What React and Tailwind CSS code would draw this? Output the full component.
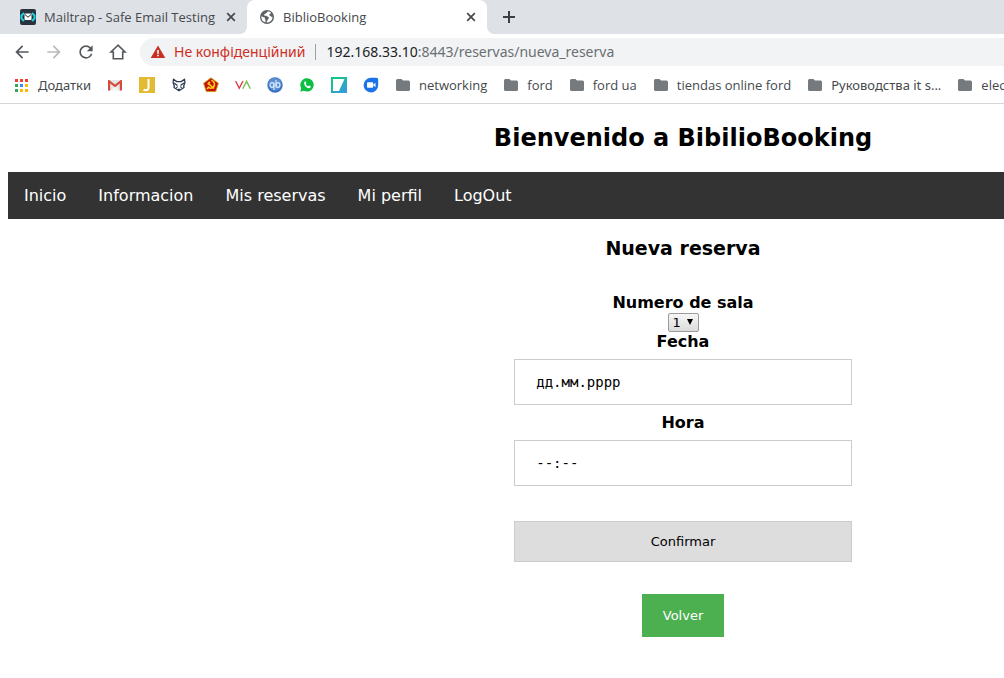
import React from "react";

function MailtrapIcon() {
  return (
    <svg viewBox="0 0 16 16" className="size-4 shrink-0" aria-hidden="true">
      <rect width="16" height="16" rx="2" fill="#2a3240" />
      <path d="M4 4 1.500 6.500v3L4 12M12 4l2.500 2.500v3L12 12" fill="none" stroke="#18d3dc" strokeWidth="2" />
      <rect x="4.500" y="4.500" width="7" height="6.500" rx="1" fill="#fff" />
      <path d="m5 5.600 3 2.600 3-2.600" fill="none" stroke="#2a3240" strokeWidth="1" />
    </svg>
  );
}

function GlobeIcon() {
  return (
    <svg viewBox="0 0 16 16" className="size-4 shrink-0" aria-hidden="true">
      <circle cx="8" cy="8" r="7" fill="#5f6368" />
      <path d="M8.5 2.4c-.6.8-.2 1.2-1.2 1.6-1 .3-.8 1.200-1.800 1.300-.9.1-.4 1.200.3 1.400.8.2 2.200-.2 2.600.7.3.7 1.300.4 1.600 1.100.2.7-.8 1.100-1 1.900-.2.8-1 1.300-1.300 2.400 0 .6.100.8.5.8a5.500 5.500 0 0 0 5.300-5.800c-.8.2-1.700-.2-2-.9-.3-.6-1.300-.2-1.300-1 0-.9.9-.9 1.400-1.500.3-.5.100-.8.100-1.200-.9-.6-2-.9-3.200-.8Z" fill="#fff" />
      <path d="M2.400 7.200c.9.200 1.600 1 2.700 1.100.8.100.9.800.8 1.400-.1.700.7.800.6 1.500v2.100A5.700 5.700 0 0 1 2.400 7.200Z" fill="#fff" />
    </svg>
  );
}

function CloseIcon() {
  return (
    <svg viewBox="0 0 16 16" className="size-4" aria-hidden="true">
      <path d="m4.200 4.200 7.600 7.600M11.800 4.200l-7.600 7.600" stroke="#45494d" strokeWidth="1.700" />
    </svg>
  );
}

function ArrowIcon({ forward }) {
  return (
    <svg viewBox="0 0 24 24" className="size-5" aria-hidden="true">
      {forward ? (
        <path d="m12 4-1.410 1.410L16.170 11H4v2h12.170l-5.580 5.590L12 20l8-8z" fill="#b8babc" />
      ) : (
        <path d="M20 11H7.830l5.590-5.590L12 4l-8 8 8 8 1.410-1.410L7.830 13H20v-2z" fill="#54585d" />
      )}
    </svg>
  );
}

function ReloadIcon() {
  return (
    <svg viewBox="0 0 24 24" className="size-5" aria-hidden="true">
      <path d="M17.650 6.350A7.958 7.958 0 0 0 12 4a8 8 0 1 0 7.730 10h-2.080A5.990 5.990 0 0 1 12 18a6 6 0 1 1 0-12c1.660 0 3.140.690 4.220 1.780L13 11h7V4l-2.350 2.350z" fill="#54585d" />
    </svg>
  );
}

function HomeIcon() {
  return (
    <svg viewBox="0 0 20 20" className="size-5" aria-hidden="true">
      <path d="M10 3.200 3 10h2.300v6.700h9.400V10H17z" fill="none" stroke="#54585d" strokeWidth="1.600" />
    </svg>
  );
}

function AppsIcon() {
  const colors = ["#ea4335", "#ea4335", "#ea4335", "#34a853", "#4285f4", "#fbbc05", "#34a853", "#fbbc05", "#fbbc05"];
  return (
    <svg viewBox="0 0 13 13" className="size-[13px] shrink-0" aria-hidden="true">
      {colors.map((c, i) => (
        <rect key={i} x={(i % 3) * 5} y={Math.floor(i / 3) * 5} width="3" height="3" fill={c} />
      ))}
    </svg>
  );
}

function FolderIcon() {
  return (
    <svg viewBox="0 0 16 16" className="size-4 shrink-0" aria-hidden="true">
      <path d="M2.500 2h4l1.500 1.500h5.500A1.500 1.500 0 0 1 15 5v7.500a1.500 1.500 0 0 1-1.500 1.500h-11A1.500 1.500 0 0 1 1 12.500v-9A1.500 1.500 0 0 1 2.500 2Z" fill="#757a7e" />
    </svg>
  );
}

const siteIcons = [
  {
    name: "Gmail",
    art: (
      <>
        <path d="M1 3h14v10.500H1z" fill="#e6e6e6" />
        <path d="m3.500 13.500 4.500-4 4.500 4z" fill="#f5f5f5" />
        <path d="M1 13.500V3h1.200L8 7.600 13.800 3H15v10.500h-2.200V6.600L8 10.300 3.200 6.600v6.900z" fill="#d54b3d" />
      </>
    ),
  },
  {
    name: "J",
    art: (
      <>
        <rect width="16" height="16" fill="#e3bb32" />
        <path d="M9.500 2v8.500c0 2-1 2.700-2.500 2.700-1 0-1.800-.2-2.500-.6" fill="none" stroke="#fff" strokeWidth="2" />
      </>
    ),
  },
  {
    name: "Fox",
    art: (
      <g fill="none" stroke="#2d3a57" strokeWidth="1.300" strokeLinejoin="round">
        <path d="M2.500 2.200 5.800 4.600h4.400l3.300-2.400.4 3.300-1.200 3.500.3 1.500L8 13.800 3 10.500 3.300 9 2.100 5.500z" />
        <path d="m3 6 3.500 2.500M13 6 9.500 8.500M5.500 11l1-1.500M10.500 11l-1-1.500M7 12.300h2" />
      </g>
    ),
  },
  {
    name: "Hammer and sickle",
    art: (
      <>
        <path d="M8 .8 15.400 6.300 12.700 14.600H3.300L.6 6.300z" fill="#c70d0d" stroke="#c9a01c" strokeWidth="1" strokeLinejoin="round" />
        <path d="M8.300 3.300c3.200.8 4.200 4.600 2 6.700-1.700 1.600-4 1.300-5.500-.2M4 12l1.500-1.500M5.600 6.800l5.600 4.700M4.700 7.400l2.200-2.500" fill="none" stroke="#ffd21a" strokeWidth="1.600" />
      </>
    ),
  },
  {
    name: "VA",
    art: (
      <g fill="none" strokeWidth="1.400">
        <path d="M.6 4 4.200 11.300 8 4" stroke="#e2394c" />
        <path d="m7.800 11.800 3.800-7.400 3.700 7.400" stroke="#79bd57" />
      </g>
    ),
  },
  {
    name: "qBittorrent",
    art: (
      <>
        <circle cx="8" cy="8" r="7.700" fill="#3c74bd" />
        <circle cx="8" cy="7" r="6.300" fill="#5b8fd2" />
        <g fill="none" stroke="#d5e8ff" strokeWidth="1.200">
          <ellipse cx="5" cy="8" rx="1.900" ry="2.300" />
          <ellipse cx="11" cy="8" rx="1.900" ry="2.300" />
          <path d="M7 5.500v7.500M9 3v7.500" />
        </g>
      </>
    ),
  },
  {
    name: "WhatsApp",
    art: (
      <>
        <path d="M1.300 14.700 2.200 11.300A6.700 6.700 0 1 1 4.800 13.800z" fill="#0abf42" />
        <path d="M5.700 4.500c.5-.3.900-.2 1.100.3l.5 1.200c.2.500-.6.900-.5 1.200.5.900 1.200 1.500 2.200 2 .4.100.7-.8 1.200-.6l1.300.6c.5.300.3 1-.1 1.400-2.600 2.200-7.900-2.700-5.700-6.100z" fill="#fff" />
      </>
    ),
  },
  {
    name: "Green square",
    art: (
      <>
        <defs>
          <linearGradient id="teal-fade" x1="0" y1="0" x2="0.600" y2="1">
            <stop offset="0" stopColor="#08cf7a" />
            <stop offset="1" stopColor="#339ddb" />
          </linearGradient>
        </defs>
        <rect width="16" height="16" fill="url(#teal-fade)" />
        <path d="M2 2h11.500L8 14H2z" fill="#fff" />
      </>
    ),
  },
  {
    name: "Duo",
    art: (
      <>
        <path d="M8 .8h5.200c1.200 0 2 .8 2 2V8A7.300 7.300 0 1 1 8 .8z" fill="#1a73e8" />
        <rect x="4" y="5.300" width="6.200" height="5.400" rx="1" fill="#fff" />
        <path d="m10 8 2.500-2.300v4.600z" fill="#fff" />
      </>
    ),
  },
];

const folders = ["networking", "ford", "ford ua", "tiendas online ford"];

function Tab({ title, icon, active }) {
  return (
    <div
      className={
        active
          ? "relative flex w-60 shrink-0 items-center gap-2 rounded-t-lg bg-white pr-2 pl-3 before:absolute before:-left-2 before:bottom-0 before:size-2 before:bg-[radial-gradient(circle_at_0_0,transparent_8px,white_8px)] after:absolute after:-right-2 after:bottom-0 after:size-2 after:bg-[radial-gradient(circle_at_100%_0,transparent_8px,white_8px)]"
          : "flex w-[239px] shrink-0 items-center gap-2 pr-2 pl-3"
      }
    >
      {icon}
      <span className="flex-1 text-[13px] leading-5 whitespace-nowrap">{title}</span>
      <button type="button" aria-label={"Close " + title}>
        <CloseIcon />
      </button>
    </div>
  );
}

function BrowserChrome() {
  return (
    <header className="border-b border-[#d5d6d8] font-['Open_Sans','Noto_Sans',sans-serif] text-[#45494d]">
      <div className="flex h-[34px] bg-[#dee1e6] pl-2">
        <Tab title="Mailtrap - Safe Email Testing" icon={<MailtrapIcon />} />
        <Tab title="BiblioBooking" icon={<GlobeIcon />} active />
        <button type="button" aria-label="New tab" className="ml-3 self-center">
          <svg viewBox="0 0 20 20" className="size-5" aria-hidden="true">
            <path d="M10 4v12M4 10h12" stroke="#3c4043" strokeWidth="2" />
          </svg>
        </button>
      </div>
      <div className="flex h-[35px] items-center bg-white pl-3">
        <div className="flex gap-3">
          <button type="button" aria-label="Back"><ArrowIcon /></button>
          <button type="button" aria-label="Forward"><ArrowIcon forward /></button>
          <button type="button" aria-label="Reload"><ReloadIcon /></button>
          <button type="button" aria-label="Home"><HomeIcon /></button>
        </div>
        <div className="ml-3 flex h-7 flex-1 items-center rounded-l-full bg-[#f1f3f4] pl-2.5 font-['Noto_Sans',sans-serif] text-sm leading-5 whitespace-nowrap">
          <svg viewBox="0 0 16 16" className="size-4" aria-hidden="true">
            <path d="M8 1.500 15.300 14H.7z" fill="#c93025" />
            <path d="M7.200 6h1.600v3.800H7.200zM7.200 10.800h1.600v1.500H7.200z" fill="#fff" />
          </svg>
          <span className="ml-2 text-[#cf2e24]">Не конфіденційний</span>
          <span className="ml-2.5 h-4 w-px bg-[#9aa0a6]" />
          <span className="ml-2.5 text-[#6b6f73]">
            <span className="text-[#202124]">192.168.33.10</span>:8443/reservas/nueva_reserva
          </span>
        </div>
      </div>
      <nav aria-label="Bookmarks" className="flex h-[34px] items-center gap-4 overflow-hidden bg-white pb-0.5 pl-[15px] text-[13px] leading-5 whitespace-nowrap">
        <a href="#apps" className="flex w-19 shrink-0 items-center gap-2.5 font-['Noto_Sans',sans-serif]">
          <AppsIcon />
          Додатки
        </a>
        {siteIcons.map((s) => (
          <a key={s.name} href="#site" aria-label={s.name} className="shrink-0">
            <svg viewBox="0 0 16 16" className="size-4" aria-hidden="true">{s.art}</svg>
          </a>
        ))}
        {folders.map((f) => (
          <a key={f} href="#folder" className="flex shrink-0 items-center gap-2">
            <FolderIcon />
            {f}
          </a>
        ))}
        <a href="#folder" className="flex shrink-0 items-center gap-2 font-['Noto_Sans',sans-serif]">
          <FolderIcon />
          Руководства it s...
        </a>
        <a href="#folder" className="flex shrink-0 items-center gap-2">
          <FolderIcon />
          elec
        </a>
      </nav>
    </header>
  );
}

const links = ["Inicio", "Informacion", "Mis reservas", "Mi perfil", "LogOut"];

export default function App() {
  return (
    <div className="min-h-screen overflow-hidden bg-white">
      <BrowserChrome />
      <main className="min-w-[1366px] px-2 pb-10 text-center font-['DejaVu_Sans',sans-serif] text-base leading-[19px] text-black">
        <h1 className="my-5 text-2xl leading-7 font-bold">Bienvenido a BibilioBooking</h1>
        <nav aria-label="Principal" className="flex bg-[#333] text-white">
          {links.map((l) => (
            <a key={l} href="#nav" className="px-4 py-3.5">{l}</a>
          ))}
        </nav>
        <h2 className="mt-[18px] text-[19px] leading-[22px] font-bold">Nueva reserva</h2>
        <form className="mt-8 flex flex-col items-center pt-0.5" onSubmit={(e) => e.preventDefault()}>
          <label htmlFor="sala" className="font-bold">Numero de sala</label>
          <div className="relative mt-px flex">
            <select
              id="sala"
              className="h-[19px] w-[31px] appearance-none rounded-xs border border-[#9b9b9b] bg-linear-to-b from-[#f6f6f6] to-[#dcdcdc] pl-1 text-[13px] leading-4"
            >
              <option>1</option>
              <option>2</option>
              <option>3</option>
            </select>
            <svg viewBox="0 0 6 6" className="pointer-events-none absolute top-1.5 right-1.5 size-1.5" aria-hidden="true">
              <path d="M0 0h6L3 6z" fill="#000" />
            </svg>
          </div>
          <label htmlFor="fecha" className="font-bold">Fecha</label>
          <input
            id="fecha"
            type="text"
            placeholder="дд.мм.рррр"
            className="my-2 h-[46px] w-1/4 border border-[#ccc] px-[21px] font-['DejaVu_Sans_Mono',monospace] text-sm placeholder:text-black"
          />
          <label htmlFor="hora" className="font-bold">Hora</label>
          <input
            id="hora"
            type="text"
            placeholder="--:--"
            className="my-2 h-[46px] w-1/4 border border-[#ccc] px-[21px] font-['DejaVu_Sans_Mono',monospace] text-sm placeholder:text-black"
          />
          <button type="submit" className="mt-[27px] h-[41px] w-1/4 border border-[#ccc] bg-[#ddd] text-[13px]">
            Confirmar
          </button>
          <button type="button" className="mt-8 bg-[#4caf50] px-[21px] py-3 text-[13px] text-white">
            Volver
          </button>
        </form>
      </main>
    </div>
  );
}
